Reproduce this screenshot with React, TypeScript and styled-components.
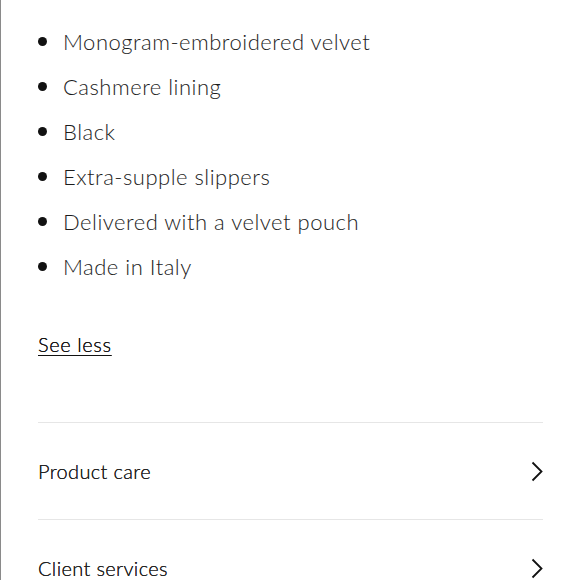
import styled, {createGlobalStyle} from "styled-components";

const GlobalStyle = createGlobalStyle`
    html, body {
        margin: 0;
        padding: 0;
        background: #fff;
        overflow: hidden;
    }
`

const details = [
    "Monogram-embroidered velvet",
    "Cashmere lining",
    "Black",
    "Extra-supple slippers",
    "Delivered with a velvet pouch",
    "Made in Italy",
]

const links = ["Product care", "Client services"]

const Chevron = () => (
    <svg width="12" height="21" viewBox="0 0 12 21" fill="none">
        <path d="M1.5 1.5 L10.5 10.5 L1.5 19.5" stroke="#111" strokeWidth="1.8" strokeLinejoin="miter"/>
    </svg>
)

export default function App() {
    return (
        <>
            <GlobalStyle/>
            <Page>
                <DetailList>
                    {details.map(item => (
                        <DetailItem key={item}>{item}</DetailItem>
                    ))}
                </DetailList>
                <SeeLess href="#">See less</SeeLess>
                <Accordion>
                    {links.map(label => (
                        <AccordionRow key={label}>
                            <RowLabel>{label}</RowLabel>
                            <Chevron/>
                        </AccordionRow>
                    ))}
                </Accordion>
            </Page>
        </>
    )
}

const Page = styled.div`
    box-sizing: border-box;
    width: 580px;
    height: 580px;
    overflow: hidden;
    border-left: 1px solid #8a8a8a;
    padding: 19px 37px 0 37px;
    font-family: "Lato", "Liberation Sans", sans-serif;
    color: #1a1a1a;
`

const DetailList = styled.ul`
    list-style: none;
    margin: 0;
    padding: 0;
`

const DetailItem = styled.li`
    position: relative;
    height: 45px;
    line-height: 45px;
    padding-left: 25px;
    font-size: 22px;
    font-weight: 300;
    letter-spacing: 0.5px;
    color: #1c1c1c;

    &::before {
        content: "";
        position: absolute;
        left: 0;
        top: 18px;
        width: 9px;
        height: 9px;
        border-radius: 50%;
        background: #111;
    }
`

const SeeLess = styled.a`
    display: inline-block;
    margin-top: 43px;
    font-size: 20px;
    font-weight: 300;
    line-height: 24px;
    letter-spacing: 0.6px;
    color: #111;
    text-shadow: 0 0 0.3px #111;
    text-decoration: underline;
    text-underline-offset: 3px;
    text-decoration-thickness: 1px;
`

const Accordion = styled.div`
    margin-top: 66px;
    border-top: 1px solid #e6e6e6;
`

const AccordionRow = styled.div`
    display: flex;
    align-items: center;
    justify-content: space-between;
    height: 96px;
    border-bottom: 1px solid #e6e6e6;
`

const RowLabel = styled.span`
    font-size: 20px;
    font-weight: 300;
    letter-spacing: 0.35px;
    color: #222;
    text-shadow: 0 0 0.4px #111;
`
